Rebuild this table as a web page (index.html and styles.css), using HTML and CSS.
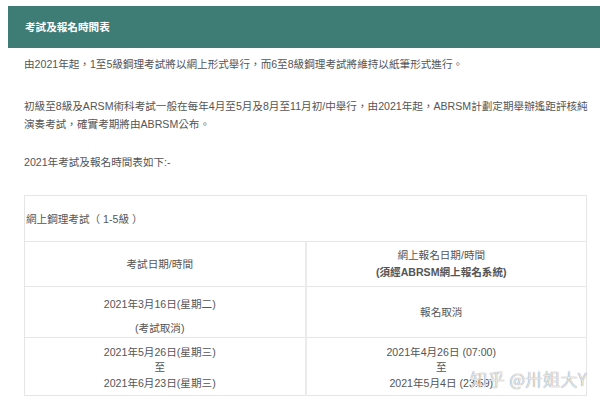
FILE: index.html
```html
<!DOCTYPE html>
<html lang="zh-Hant">
<head>
<meta charset="utf-8">
<link rel="stylesheet" href="styles.css">
</head>
<body>
<div class="page">
  <div class="banner">考試及報名時間表</div>
  <div class="content">
    <p class="p1">由2021年起，1至5級鋼理考試將以網上形式舉行，而6至8級鋼理考試將維持以紙筆形式進行。</p>
    <p class="p2">初級至8級及ARSM術科考試一般在每年4月至5月及8月至11月初/中舉行，由2021年起，ABRSM計劃定期舉辦遙距評核純演奏考試，確實考期將由ABRSM公布。</p>
    <p class="p3">2021年考試及報名時間表如下:-</p>
    <table class="sched">
      <tr class="r-title"><td colspan="2">網上鋼理考試（ 1-5級 ）</td></tr>
      <tr class="r-head">
        <td class="c-left">考試日期/時間</td>
        <td class="c-right">網上報名日期/時間<br><b>(須經ABRSM網上報名系統)</b></td>
      </tr>
      <tr class="r-two">
        <td class="c-left top"><div>2021年3月16日(星期二)</div><div class="gap">(考試取消)</div></td>
        <td class="c-right">報名取消</td>
      </tr>
      <tr class="r-three">
        <td class="c-left">2021年5月26日(星期三)<br>至<br>2021年6月23日(星期三)</td>
        <td class="c-right">2021年4月26日 (07:00)<br>至<br>2021年5月4日 (23:59)</td>
      </tr>
    </table>
  </div>
  <div class="watermark">知乎 @卅姐大Y</div>
</div>
</body>
</html>
```

FILE: styles.css
```css
html, body {
  margin: 0;
  padding: 0;
  background: #fff;
}
body {
  font-family: "Liberation Sans", "Noto Sans CJK TC", sans-serif;
  font-size: 10.6px;
  color: #555;
  overflow: hidden;
}
.page {
  position: relative;
  padding: 6px 0 0 8px;
  height: 397px;
}
.banner {
  background: #3e7c76;
  color: #fff;
  font-weight: bold;
  height: 42px;
  line-height: 42px;
  padding-left: 17px;
  font-size: 10.6px;
}
.content {
  padding: 0 10px 0 16px;
}
.content p {
  margin: 0;
  line-height: 18px;
}
.p1 { margin-top: 7px !important; }
.p2 { margin-top: 24px !important; }
.p3 { margin-top: 20px !important; }
.sched {
  margin-top: 24px;
  width: 563px;
  border-collapse: collapse;
  border: 1px solid #e6e6e6;
  table-layout: fixed;
}
.sched td {
  border: 1px solid #e6e6e6;
  padding: 0;
  vertical-align: middle;
}
.sched .c-left {
  width: 234px;
  text-align: center;
  padding-right: 10px;
  border-right: 2px solid #ebebeb;
}
.sched .c-right {
  text-align: center;
  padding-right: 10px;
}
.r-title td {
  height: 45px;
  text-align: left;
  padding-left: 1px;
}
.r-head td {
  height: 44px;
  line-height: 17px;
}
.r-head b {
  font-weight: bold;
}
.r-two td {
  height: 50px;
  line-height: 17px;
}
.r-two .top {
  vertical-align: top;
  height: 41px;
  padding-top: 9px;
}
.r-two .gap {
  margin-top: 7px;
}
.r-three td {
  height: 54px;
  padding-top: 3px;
  line-height: 15.5px;
}
.watermark {
  position: absolute;
  right: 13px;
  top: 366px;
  font-family: "Noto Sans CJK SC", sans-serif;
  font-weight: 300;
  font-size: 17px;
  color: rgba(255, 255, 255, 0.92);
  text-shadow: 0 0 1px #8a8a8a, 0 0 1px #8a8a8a;
  letter-spacing: 0.5px;
}
```
